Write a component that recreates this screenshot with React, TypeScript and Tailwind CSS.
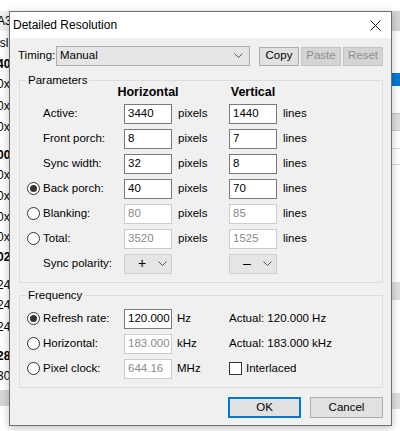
import React, { useState } from 'react';

const font = { fontFamily: '"Liberation Sans", Arial, sans-serif' };

const Radio = ({ checked }: { checked: boolean }) => (
  <span className="w-[13px] h-[13px] rounded-full border border-[#333] bg-white flex items-center justify-center shrink-0">
    {checked && <span className="w-[7px] h-[7px] rounded-full bg-[#333]" />}
  </span>
);

const Field = ({ value, disabled }: { value: string; disabled?: boolean }) => (
  <div
    className={`w-[48px] h-[20px] bg-white border flex items-center pl-[3px] ${
      disabled ? 'border-[#cccccc] text-[#8a8a8a]' : 'border-[#7a7a7a] text-black'
    }`}
  >
    {value}
  </div>
);

const Chevron = () => (
  <svg width="9" height="6" viewBox="0 0 9 6" className="shrink-0">
    <path d="M0.5 0.5 L4.5 4.5 L8.5 0.5" fill="none" stroke="#555" strokeWidth="1" />
  </svg>
);

const Button = ({ label, disabled, primary }: { label: string; disabled?: boolean; primary?: boolean }) => (
  <div
    className={`flex-1 flex items-center justify-center ${
      disabled
        ? 'bg-[#d4d4d4] border border-[#c4c4c4] text-[#8f8f8f]'
        : primary
        ? 'bg-[#e1e1e1] border-2 border-[#0078d7]'
        : 'bg-[#e1e1e1] border border-[#adadad]'
    }`}
  >
    {label}
  </div>
);

const Group = ({ title, children, className }: { title: string; children: React.ReactNode; className?: string }) => (
  <div className={`relative border border-[#dcdcdc] ${className ?? ''}`}>
    <span className="absolute -top-[8px] left-[6px] px-[2px] bg-[#f0f0f0] leading-[15px]">{title}</span>
    {children}
  </div>
);

type Row = { label: string; radio?: boolean; checked?: boolean; h: string; v: string; disabled?: boolean };

const rows: Row[] = [
  { label: 'Active:', h: '3440', v: '1440' },
  { label: 'Front porch:', h: '8', v: '7' },
  { label: 'Sync width:', h: '32', v: '8' },
  { label: 'Back porch:', radio: true, checked: true, h: '40', v: '70' },
  { label: 'Blanking:', radio: true, h: '80', v: '85', disabled: true },
  { label: 'Total:', radio: true, h: '3520', v: '1525', disabled: true },
];

const bgLeft: { t: string; y: number; bold?: boolean }[] = [
  { t: 'A3', y: 14 },
  { t: 'isl', y: 36 },
  { t: '40', y: 57, bold: true },
  { t: '0x', y: 77 },
  { t: '0x', y: 99 },
  { t: '0x', y: 120 },
  { t: '00', y: 148, bold: true },
  { t: '0x', y: 168 },
  { t: '0x', y: 189 },
  { t: '0x', y: 210 },
  { t: '0x', y: 230 },
  { t: '02', y: 250, bold: true },
  { t: '24', y: 278 },
  { t: '24', y: 298 },
  { t: '24', y: 320 },
  { t: '28', y: 349, bold: true },
  { t: '30', y: 369 },
];

export default function App() {
  const [timing] = useState('Manual');

  return (
    <div className="relative w-[400px] h-[431px] overflow-hidden bg-white text-[11.5px] text-black" style={font}>
      {/* parent window behind the dialog */}
      <div className="absolute left-0 top-[11px] w-[9px] h-[20px] bg-[#f0f0f0]" />
      {bgLeft.map((r, i) => (
        <span
          key={i}
          className={`absolute -left-[3px] text-[12px] leading-[15px] ${r.bold ? 'font-bold' : ''}`}
          style={{ top: r.y }}
        >
          {r.t}
        </span>
      ))}
      <div className="absolute left-0 top-[390px] w-[9px] h-[16px] bg-[#d6d6d6]" />
      <div className="absolute left-[392px] top-[11px] w-[8px] h-[20px] bg-[#d4d4d4]" />
      <div className="absolute left-[392px] top-[73px] w-[8px] h-[13px] bg-[#0078d7]" />
      <div className="absolute left-[392px] top-[113px] w-[8px] h-[18px] bg-[#dedede] border-y border-[#c8c8c8]" />
      <div className="absolute left-[392px] top-[148px] w-[8px] h-[1px] bg-[#d8d8d8]" />
      <div className="absolute left-[392px] top-[164px] w-[8px] h-[1px] bg-[#d8d8d8]" />
      <div className="absolute left-[392px] top-[282px] w-[8px] h-[18px] bg-[#dedede]" />
      <div className="absolute left-[392px] top-[393px] w-[8px] h-[16px] bg-[#dedede]" />

      {/* dialog */}
      <div className="absolute left-[9px] top-[11px] w-[383px] border border-[#6e6e6e] bg-[#f0f0f0] shadow-[0_2px_8px_rgba(0,0,0,0.25)]">
        <div className="h-[26px] bg-white flex items-center justify-between pl-[3px] pr-[10px]">
          <span className="text-[12px]">Detailed Resolution</span>
          <svg width="11" height="11" viewBox="0 0 11 11">
            <path d="M0.5 0.5 L10.5 10.5 M10.5 0.5 L0.5 10.5" stroke="#111" strokeWidth="1" />
          </svg>
        </div>

        <div className="pt-[8px] pl-[8px] pr-[8px] pb-[7px]">
          <div className="flex items-center h-[20px]">
            <span className="w-[38px] whitespace-nowrap">Timing:</span>
            <div className="w-[194px] h-[20px] bg-[#e5e5e5] border border-[#acacac] flex items-center justify-between pl-[3px] pr-[6px]">
              <span>{timing}</span>
              <Chevron />
            </div>
            <div className="flex gap-[2px] ml-[9px] h-[19px]">
              <div className="w-[40px] flex"><Button label="Copy" /></div>
              <div className="w-[40px] flex"><Button label="Paste" disabled /></div>
              <div className="w-[40px] flex"><Button label="Reset" disabled /></div>
            </div>
          </div>

          <Group title="Parameters" className="mt-[14px] ml-[1px] pt-[2px] pb-[6px]">
            <div className="flex h-[18px] items-center font-bold text-[12.5px]">
              <span className="w-[104px]" />
              <span className="w-[48px] flex justify-center whitespace-nowrap">Horizontal</span>
              <span className="w-[57px]" />
              <span className="w-[48px] flex justify-center whitespace-nowrap">Vertical</span>
            </div>
            {rows.map((r) => (
              <div key={r.label} className="flex items-center h-[25px]">
                <div className="w-[104px] flex items-center pl-[7px] gap-[3px]">
                  {r.radio ? <Radio checked={!!r.checked} /> : <span className="w-[13px]" />}
                  <span>{r.label}</span>
                </div>
                <Field value={r.h} disabled={r.disabled} />
                <span className="w-[57px] pl-[6px]">pixels</span>
                <Field value={r.v} disabled={r.disabled} />
                <span className="pl-[6px]">lines</span>
              </div>
            ))}
            <div className="flex items-center h-[25px]">
              <div className="w-[104px] pl-[23px]">Sync polarity:</div>
              <div className="w-[48px] h-[20px] bg-[#e5e5e5] border border-[#cfcfcf] flex items-center justify-between pl-[13px] pr-[4px]">
                <span className="text-[14px]">+</span>
                <Chevron />
              </div>
              <span className="w-[57px]" />
              <div className="w-[48px] h-[20px] bg-[#e5e5e5] border border-[#cfcfcf] flex items-center justify-between pl-[13px] pr-[4px]">
                <span className="text-[14px]">–</span>
                <Chevron />
              </div>
            </div>
          </Group>

          <Group title="Frequency" className="mt-[12px] ml-[1px] pt-[10px] pb-[6px]">
            {[
              { label: 'Refresh rate:', checked: true, val: '120.000', unit: 'Hz', extra: 'Actual: 120.000 Hz' },
              { label: 'Horizontal:', checked: false, val: '183.000', unit: 'kHz', extra: 'Actual: 183.000 kHz' },
              { label: 'Pixel clock:', checked: false, val: '644.16', unit: 'MHz', extra: '' },
            ].map((r) => (
              <div key={r.label} className="flex items-center h-[25px]">
                <div className="w-[104px] flex items-center pl-[7px] gap-[3px]">
                  <Radio checked={r.checked} />
                  <span>{r.label}</span>
                </div>
                <Field value={r.val} disabled={!r.checked} />
                <span className="w-[57px] pl-[5px]">{r.unit}</span>
                {r.extra ? (
                  <span>{r.extra}</span>
                ) : (
                  <div className="flex items-center gap-[4px]">
                    <span className="w-[13px] h-[13px] border border-[#333] bg-white" />
                    <span>Interlaced</span>
                  </div>
                )}
              </div>
            ))}
          </Group>

          <div className="flex justify-end gap-[9px] mt-[9px] h-[21px]">
            <div className="w-[73px] flex"><Button label="OK" primary /></div>
            <div className="w-[73px] flex"><Button label="Cancel" /></div>
          </div>
        </div>
      </div>
    </div>
  );
}
